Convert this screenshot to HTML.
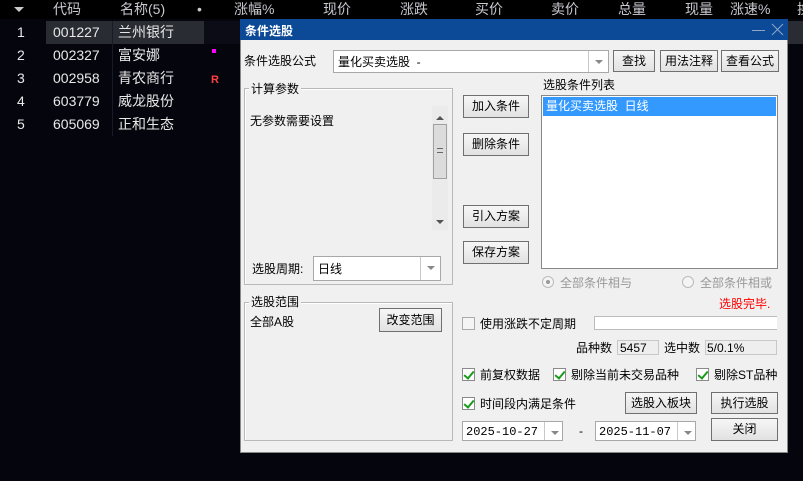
<!DOCTYPE html>
<html><head><meta charset="utf-8"><style>
*{margin:0;padding:0;box-sizing:border-box}
body{width:803px;height:481px;background:#05050d;position:relative;overflow:hidden;font-family:"Liberation Sans","Noto Sans CJK SC",sans-serif;font-size:12px}
.a{position:absolute;white-space:nowrap}
.h{color:#c8c8d0;font-size:14px;top:0;line-height:19px}
.r{color:#e8e8e8;font-size:14px;line-height:23px}
.btn{position:absolute;background:linear-gradient(#f6f6f6,#e2e2e2);border:1px solid #707070;text-align:center;color:#000;font-size:12px}
.box{position:absolute;background:#fff;border:1px solid #a8a8a8}
.grp{position:absolute;border:1px solid #b8b8b8;box-shadow:inset 1px 1px 0 #fff}
.lbl{position:absolute;background:#f0f0f0;padding:0 2px;font-size:12px;line-height:14px}
.dd{position:absolute;right:0;top:0;bottom:0;width:20px;border-left:1px solid #c8c8c8}
.dd:after{content:"";position:absolute;left:6px;top:9px;border:4px solid transparent;border-top:4px solid #888}
.cb{position:absolute;width:13px;height:13px;border:1px solid #8a8a8a;background:#fff}
.cb.k:after{content:"";position:absolute;left:3px;top:0px;width:4px;height:8px;border:solid #1a9a1a;border-width:0 2px 2px 0;transform:rotate(40deg)}
.t{position:absolute;font-size:12px;color:#000;line-height:14px;white-space:nowrap}
</style></head><body>
<div class="a" style="left:0;top:0;width:803px;height:19px;background:#000"></div>
<div class="a" style="left:14px;top:7px;border:5px solid transparent;border-top:5px solid #ccc;width:0;height:0"></div>
<div class="a h" style="left:53px">代码</div>
<div class="a h" style="left:120px">名称(5)</div>
<div class="a h" style="left:197px">•</div>
<div class="a h" style="left:234px">涨幅%</div>
<div class="a h" style="left:323px">现价</div>
<div class="a h" style="left:400px">涨跌</div>
<div class="a h" style="left:475px">买价</div>
<div class="a h" style="left:551px">卖价</div>
<div class="a h" style="left:618px">总量</div>
<div class="a h" style="left:685px">现量</div>
<div class="a h" style="left:730px">涨速%</div>
<div class="a h" style="left:797px">换</div>
<div class="a" style="left:46px;top:21px;width:158px;height:23px;background:#2a2c33"></div>
<div class="a" style="left:204px;top:21px;width:36px;height:23px;background:#0c0c16"></div>
<div class="a" style="left:788px;top:21px;width:15px;height:23px;background:#2a2c33"></div>
<div class="a" style="left:112px;top:21px;width:1px;height:115px;background:#1a1a26"></div>
<div class="a r" style="left:17px;top:21px">1</div><div class="a r" style="left:53px;top:21px">001227</div><div class="a r" style="left:118px;top:21px">兰州银行</div>
<div class="a r" style="left:17px;top:44px">2</div><div class="a r" style="left:53px;top:44px">002327</div><div class="a r" style="left:118px;top:44px">富安娜</div>
<div class="a r" style="left:17px;top:67px">3</div><div class="a r" style="left:53px;top:67px">002958</div><div class="a r" style="left:118px;top:67px">青农商行</div>
<div class="a r" style="left:17px;top:90px">4</div><div class="a r" style="left:53px;top:90px">603779</div><div class="a r" style="left:118px;top:90px">威龙股份</div>
<div class="a r" style="left:17px;top:113px">5</div><div class="a r" style="left:53px;top:113px">605069</div><div class="a r" style="left:118px;top:113px">正和生态</div>
<div class="a" style="left:212px;top:49px;width:4px;height:4px;background:#f0f"></div>
<div class="a" style="left:211px;top:74px;color:#ff4040;font-weight:bold;font-size:11px">R</div>

<div class="a" style="left:240px;top:19px;width:548px;height:434px;background:#f0f0f0;border:1px solid #888"></div>
<div class="a" style="left:240px;top:19px;width:548px;height:21px;background:#0c4a97"></div>
<div class="a" style="left:245px;top:22px;color:#fff;font-weight:bold;font-size:12px">条件选股</div>
<svg class="a" style="left:750px;top:22px" width="36" height="16"><line x1="2" y1="8.5" x2="15" y2="8.5" stroke="#8fa8c8" stroke-width="1"/><line x1="22" y1="2" x2="33" y2="13" stroke="#8fa8c8"/><line x1="33" y1="2" x2="22" y2="13" stroke="#8fa8c8"/></svg>

<div class="t" style="left:244px;top:54px">条件选股公式</div>
<div class="box" style="left:333px;top:50px;width:276px;height:23px"><span class="t" style="left:4px;top:4px">量化买卖选股&nbsp; -</span><div class="dd"></div></div>
<div class="btn" style="left:613px;top:50px;width:42px;height:22px;line-height:20px">查找</div>
<div class="btn" style="left:660px;top:50px;width:58px;height:22px;line-height:20px">用法注释</div>
<div class="btn" style="left:721px;top:50px;width:58px;height:22px;line-height:20px">查看公式</div>

<div class="grp" style="left:244px;top:88px;width:209px;height:197px"></div>
<div class="lbl" style="left:249px;top:82px">计算参数</div>
<div class="t" style="left:250px;top:114px">无参数需要设置</div>
<div class="a" style="left:432px;top:106px;width:16px;height:124px;background:#ebebeb"></div>
<div class="a" style="left:436px;top:112px;border:4px solid transparent;border-bottom:4px solid #555;width:0;height:0"></div>
<div class="a" style="left:436px;top:220px;border:4px solid transparent;border-top:4px solid #555;width:0;height:0"></div>
<div class="a" style="left:433px;top:124px;width:14px;height:55px;background:#dcdcdc;border:1px solid #a0a0a0"></div>
<div class="a" style="left:437px;top:148px;width:6px;height:5px;border-top:1px solid #666;border-bottom:1px solid #666"></div>
<div class="t" style="left:252px;top:262px">选股周期:</div>
<div class="box" style="left:313px;top:256px;width:128px;height:25px"><span class="t" style="left:4px;top:5px">日线</span><div class="dd"></div></div>

<div class="grp" style="left:244px;top:302px;width:209px;height:139px"></div>
<div class="lbl" style="left:249px;top:295px">选股范围</div>
<div class="t" style="left:250px;top:315px">全部A股</div>
<div class="btn" style="left:379px;top:308px;width:63px;height:24px;line-height:22px">改变范围</div>

<div class="btn" style="left:463px;top:95px;width:66px;height:23px;line-height:21px">加入条件</div>
<div class="btn" style="left:463px;top:133px;width:66px;height:23px;line-height:21px">删除条件</div>
<div class="btn" style="left:463px;top:205px;width:66px;height:23px;line-height:21px">引入方案</div>
<div class="btn" style="left:463px;top:241px;width:66px;height:23px;line-height:21px">保存方案</div>

<div class="t" style="left:543px;top:78px">选股条件列表</div>
<div class="box" style="left:541px;top:95px;width:237px;height:174px;border-color:#888"></div>
<div class="a" style="left:543px;top:97px;width:233px;height:19px;background:#3399ff"></div>
<div class="t" style="left:546px;top:99px;color:#fff">量化买卖选股&nbsp; 日线</div>

<div class="a" style="left:542px;top:276px;width:12px;height:12px;border-radius:50%;border:1px solid #bbb;background:#f4f4f4"></div>
<div class="a" style="left:546px;top:280px;width:4px;height:4px;border-radius:50%;background:#999"></div>
<div class="t" style="left:560px;top:276px;color:#999">全部条件相与</div>
<div class="a" style="left:682px;top:276px;width:12px;height:12px;border-radius:50%;border:1px solid #bbb;background:#f4f4f4"></div>
<div class="t" style="left:700px;top:276px;color:#999">全部条件相或</div>

<div class="t" style="left:719px;top:297px;color:#f00">选股完毕.</div>

<div class="cb" style="left:462px;top:317px;background:#f4f4f4;border-color:#aaa"></div>
<div class="t" style="left:480px;top:317px">使用涨跌不定周期</div>
<div class="a" style="left:594px;top:316px;width:183px;height:14px;background:#fff;border:1px solid #bbb;border-right:none"></div>

<div class="t" style="left:576px;top:341px">品种数</div>
<div class="a" style="left:617px;top:340px;width:42px;height:15px;border:1px solid #c8c8c8;background:#eee"></div>
<div class="t" style="left:620px;top:341px">5457</div>
<div class="t" style="left:664px;top:341px">选中数</div>
<div class="a" style="left:705px;top:340px;width:72px;height:15px;border:1px solid #c8c8c8;background:#eee"></div>
<div class="t" style="left:707px;top:341px">5/0.1%</div>

<div class="cb k" style="left:462px;top:368px"></div><div class="t" style="left:480px;top:368px">前复权数据</div>
<div class="cb k" style="left:553px;top:368px"></div><div class="t" style="left:571px;top:368px">剔除当前未交易品种</div>
<div class="cb k" style="left:696px;top:368px"></div><div class="t" style="left:714px;top:368px">剔除ST品种</div>

<div class="cb k" style="left:462px;top:397px"></div><div class="t" style="left:480px;top:397px">时间段内满足条件</div>
<div class="btn" style="left:625px;top:392px;width:72px;height:22px;line-height:20px">选股入板块</div>
<div class="btn" style="left:711px;top:392px;width:67px;height:22px;line-height:20px">执行选股</div>

<div class="box" style="left:462px;top:421px;width:101px;height:20px"><span class="t" style="left:3px;top:3px;font-family:'Liberation Mono',monospace">2025-10-27</span><div class="dd" style="width:18px"></div></div>
<div class="t" style="left:579px;top:424px">-</div>
<div class="box" style="left:595px;top:421px;width:101px;height:20px"><span class="t" style="left:3px;top:3px;font-family:'Liberation Mono',monospace">2025-11-07</span><div class="dd" style="width:18px"></div></div>
<div class="btn" style="left:711px;top:418px;width:67px;height:23px;line-height:21px">关闭</div>
</body></html>
